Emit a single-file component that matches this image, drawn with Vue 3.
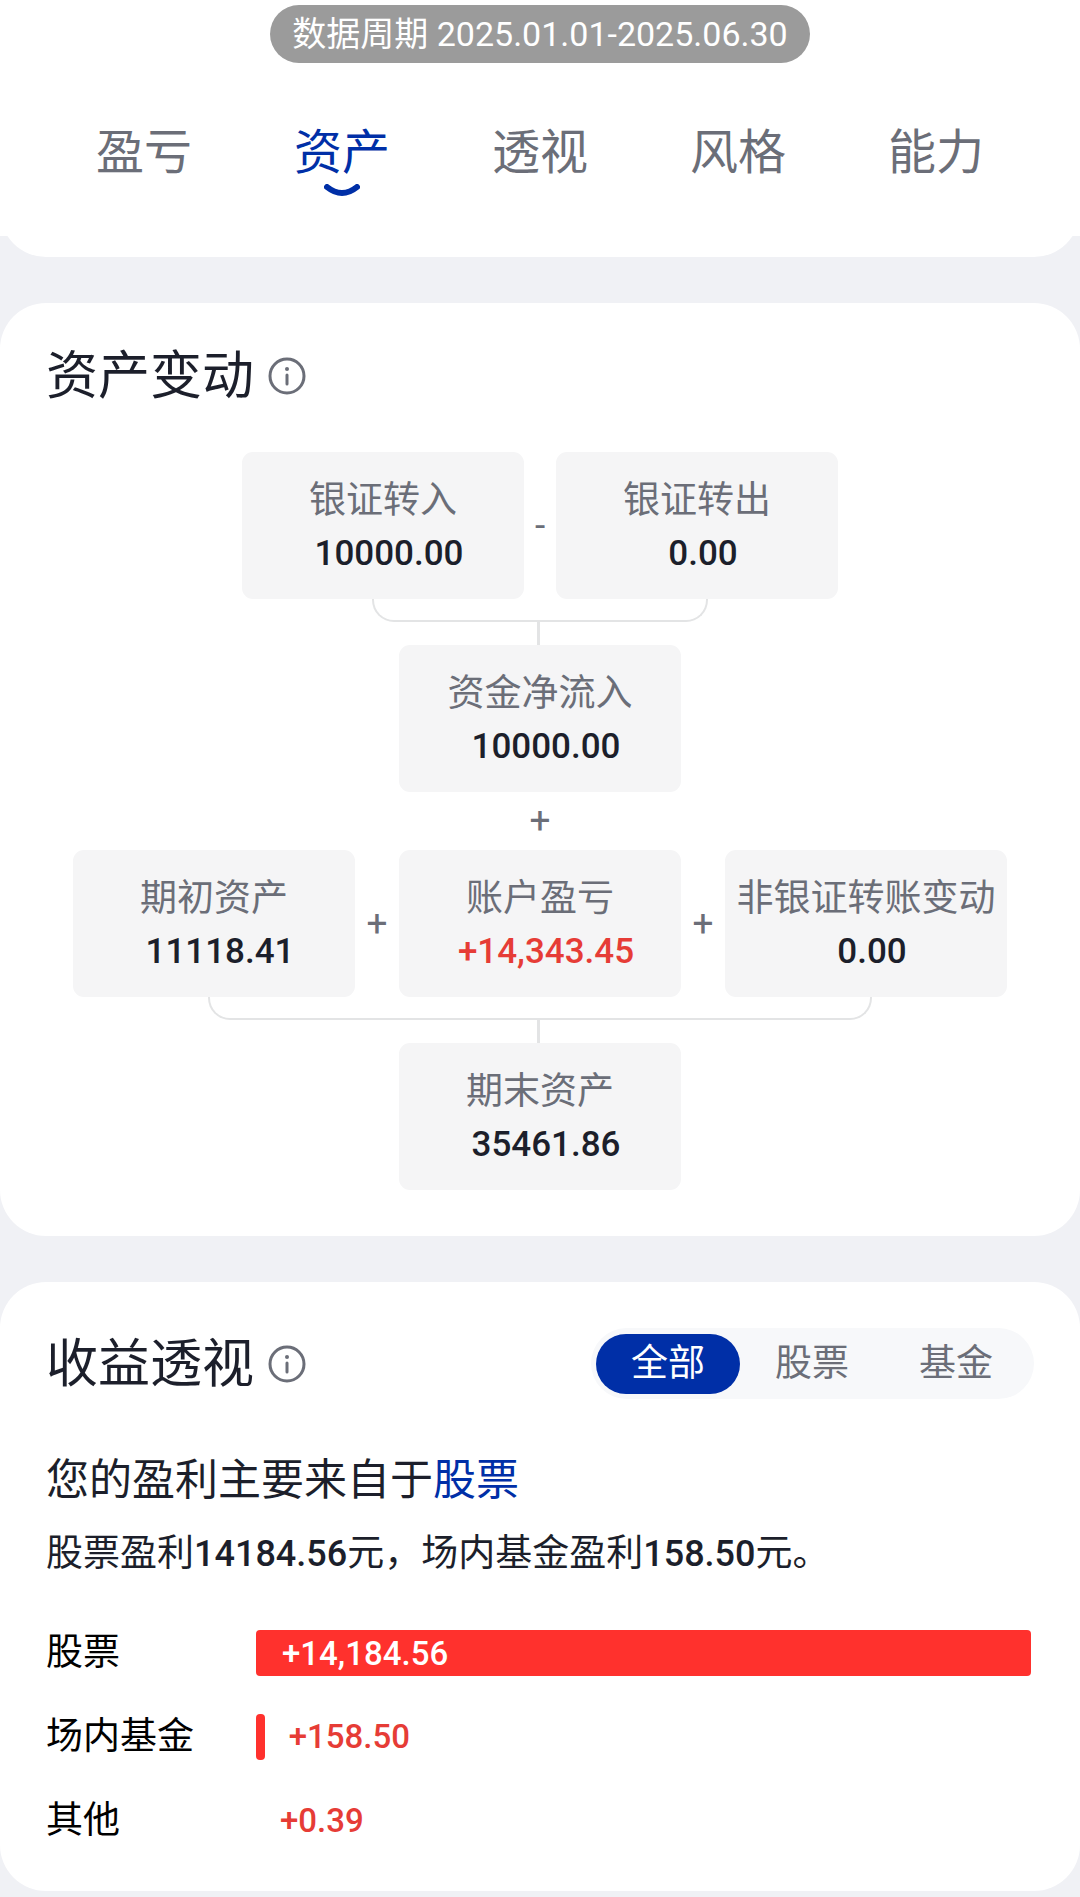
<script setup>
import { ref } from 'vue'

const tabs = ['盈亏', '资产', '透视', '风格', '能力']
const activeTab = ref('资产')

const scopes = ['全部', '股票', '基金']
const activeScope = ref('全部')

const sources = [
  { name: '股票', amount: 14184.56, text: '+14,184.56' },
  { name: '场内基金', amount: 158.5, text: '+158.50' },
  { name: '其他', amount: 0.39, text: '+0.39' }
]
const largest = Math.max(...sources.map((s) => s.amount))
const barWidth = (s) => `${(s.amount / largest) * 100}%`
</script>

<template>
  <div class="page">
    <div class="head-wrap">
      <header class="head">
        <p class="period">数据周期 2025.01.01-2025.06.30</p>
        <nav class="tabs">
          <button
            v-for="tab in tabs"
            :key="tab"
            type="button"
            class="tab"
            :class="{ active: tab === activeTab }"
            @click="activeTab = tab"
          >
            {{ tab }}
            <svg v-if="tab === activeTab" class="smile" viewBox="0 0 36 13" aria-hidden="true">
              <path d="M3 3Q18 15 33 3" />
            </svg>
          </button>
        </nav>
      </header>
    </div>

    <section class="card">
      <div class="card-head">
        <h2>资产变动</h2>
        <button type="button" class="info" aria-label="资产变动说明">
          <svg viewBox="0 0 38 38">
            <circle class="ring" cx="19" cy="19" r="17" />
            <circle cx="19" cy="12" r="2" />
            <path class="stem" d="M19 18V27" />
          </svg>
        </button>
      </div>

      <div class="flow">
        <div class="flow-row tight">
          <div class="box"><span class="label">银证转入</span><span class="value">10000.00</span></div>
          <span class="sign">-</span>
          <div class="box"><span class="label">银证转出</span><span class="value">0.00</span></div>
        </div>
        <div class="bracket narrow"></div>
        <div class="stub"></div>
        <div class="flow-row">
          <div class="box"><span class="label">资金净流入</span><span class="value">10000.00</span></div>
        </div>
        <span class="sign between">+</span>
        <div class="flow-row">
          <div class="box"><span class="label">期初资产</span><span class="value">11118.41</span></div>
          <span class="sign">+</span>
          <div class="box"><span class="label">账户盈亏</span><span class="value gain">+14,343.45</span></div>
          <span class="sign">+</span>
          <div class="box"><span class="label">非银证转账变动</span><span class="value">0.00</span></div>
        </div>
        <div class="bracket wide"></div>
        <div class="stub"></div>
        <div class="flow-row">
          <div class="box"><span class="label">期末资产</span><span class="value">35461.86</span></div>
        </div>
      </div>
    </section>

    <section class="card">
      <div class="card-head">
        <h2>收益透视</h2>
        <button type="button" class="info" aria-label="收益透视说明">
          <svg viewBox="0 0 38 38">
            <circle class="ring" cx="19" cy="19" r="17" />
            <circle cx="19" cy="12" r="2" />
            <path class="stem" d="M19 18V27" />
          </svg>
        </button>
        <div class="switch">
          <button
            v-for="scope in scopes"
            :key="scope"
            type="button"
            :class="{ on: scope === activeScope }"
            @click="activeScope = scope"
          >{{ scope }}</button>
        </div>
      </div>

      <h3>您的盈利主要来自于<span class="accent">股票</span></h3>
      <p class="summary">股票盈利<b>14184.56</b>元，场内基金盈利<b>158.50</b>元。</p>

      <ul class="chart">
        <li v-for="s in sources" :key="s.name">
          <span class="name">{{ s.name }}</span>
          <div class="track">
            <div class="bar" :style="{ width: barWidth(s) }">
              <span v-if="s.amount === largest" class="amount inside">{{ s.text }}</span>
            </div>
            <span v-if="s.amount !== largest" class="amount">{{ s.text }}</span>
          </div>
        </li>
      </ul>
    </section>
  </div>
</template>

<style>
body {
  margin: 0;
  background: #f0f1f5;
}
</style>

<style scoped>
.page {
  padding-bottom: 6px;
  background: #f0f1f5;
  color: #1c1f2b;
  font-family: Roboto, "Noto Sans CJK SC", sans-serif;
  font-size: 37px;
}
h2, h3, p, ul {
  margin: 0;
  padding: 0;
  font-weight: 400;
}
button {
  margin: 0;
  padding: 0;
  border: 0;
  background: none;
  color: inherit;
  font: inherit;
  cursor: pointer;
}

.head-wrap {
  background: linear-gradient(#fff, #fff) no-repeat top / 100% calc(100% - 21px);
}
.head {
  display: flex;
  flex-direction: column;
  align-items: center;
  padding: 5px 45px 46px;
  border-radius: 0 0 46px 46px;
  background: #fff;
}
.period {
  padding: 0 22px;
  border-radius: 29px;
  background: #9b9b9b;
  color: #fff;
  font-size: 34px;
  line-height: 58px;
}
.tabs {
  display: flex;
  align-self: stretch;
  margin-top: 52px;
}
.tab {
  position: relative;
  flex: 1;
  height: 96px;
  padding-bottom: 20px;
  color: #6b6e78;
  font-size: 48px;
  line-height: 76px;
}
.tab.active {
  color: #002fa7;
}
.smile {
  position: absolute;
  bottom: 14px;
  left: 50%;
  width: 36px;
  height: 13px;
  margin-left: -18px;
  fill: none;
  stroke: #002fa7;
  stroke-width: 6;
  stroke-linecap: round;
}

.card {
  margin-top: 46px;
  padding: 46px;
  border-radius: 46px;
  background: #fff;
}
.card-head {
  display: flex;
  align-items: center;
}
h2 {
  padding-top: 3px;
  font-size: 52px;
  line-height: 50px;
}
.info {
  width: 38px;
  height: 38px;
  margin-left: 14px;
}
.info svg {
  display: block;
  fill: #6b6e78;
}
.info .ring,
.info .stem {
  fill: none;
  stroke: #6b6e78;
  stroke-width: 3;
}
.info .stem {
  stroke-linecap: round;
}

.flow {
  display: flex;
  flex-direction: column;
  align-items: center;
  margin: 50px 27px 0;
}
.flow-row {
  display: flex;
  justify-content: center;
  width: 100%;
}
.box {
  display: flex;
  flex: 0 1 282px;
  flex-direction: column;
  padding: 22px 0 19px;
  border-radius: 11px;
  background: #f5f5f6;
  text-align: center;
  line-height: 54px;
  white-space: nowrap;
}
.label,
.sign {
  color: #6b6e78;
}
.value {
  padding-left: 12px;
  font-size: 35px;
  font-weight: 500;
  line-height: 52px;
}
.value.gain {
  color: #e63c36;
}
.sign {
  align-self: center;
  flex: 0 0 44px;
  text-align: center;
}
.tight .sign {
  flex-basis: 32px;
}
.sign.between {
  flex-basis: auto;
  line-height: 58px;
}
.bracket {
  box-sizing: border-box;
  height: 23px;
  border: 2px solid #e3e4e5;
  border-top: 0;
  border-radius: 0 0 22px 22px;
}
.narrow {
  width: 36%;
}
.wide {
  width: 71%;
}
.stub {
  width: 3px;
  height: 23px;
  margin-right: 3px;
  background: #e3e4e5;
}

.switch {
  display: flex;
  margin-left: auto;
  padding: 6px 6px 5px 5px;
  border-radius: 36px;
  background: #f7f8fa;
  color: #6b6e78;
}
.switch button {
  width: 144px;
  height: 60px;
  border-radius: 30px;
  line-height: 60px;
}
.switch .on {
  background: #002fa7;
  color: #fff;
}

h3 {
  margin-top: 49px;
  font-size: 43px;
  line-height: 64px;
}
.accent {
  color: #002fa7;
}
.summary {
  margin-top: 15px;
  line-height: 54px;
}
.summary b {
  font-size: 36px;
  font-weight: 500;
}

.chart {
  display: flex;
  flex-direction: column;
  gap: 38px;
  margin-top: 49px;
  padding: 0 3px 1px 0;
  list-style: none;
}
.chart li {
  display: flex;
  line-height: 46px;
}
.name {
  flex: 0 0 210px;
  color: #000;
}
.track {
  display: flex;
  flex: 1;
}
.bar {
  height: 46px;
  border-radius: 4px;
  background: #ff312d;
}
.amount {
  padding-left: 24px;
  color: #e63c36;
  font-size: 33px;
  font-weight: 500;
}
.amount.inside {
  padding-left: 26px;
  color: #fff;
}
</style>
